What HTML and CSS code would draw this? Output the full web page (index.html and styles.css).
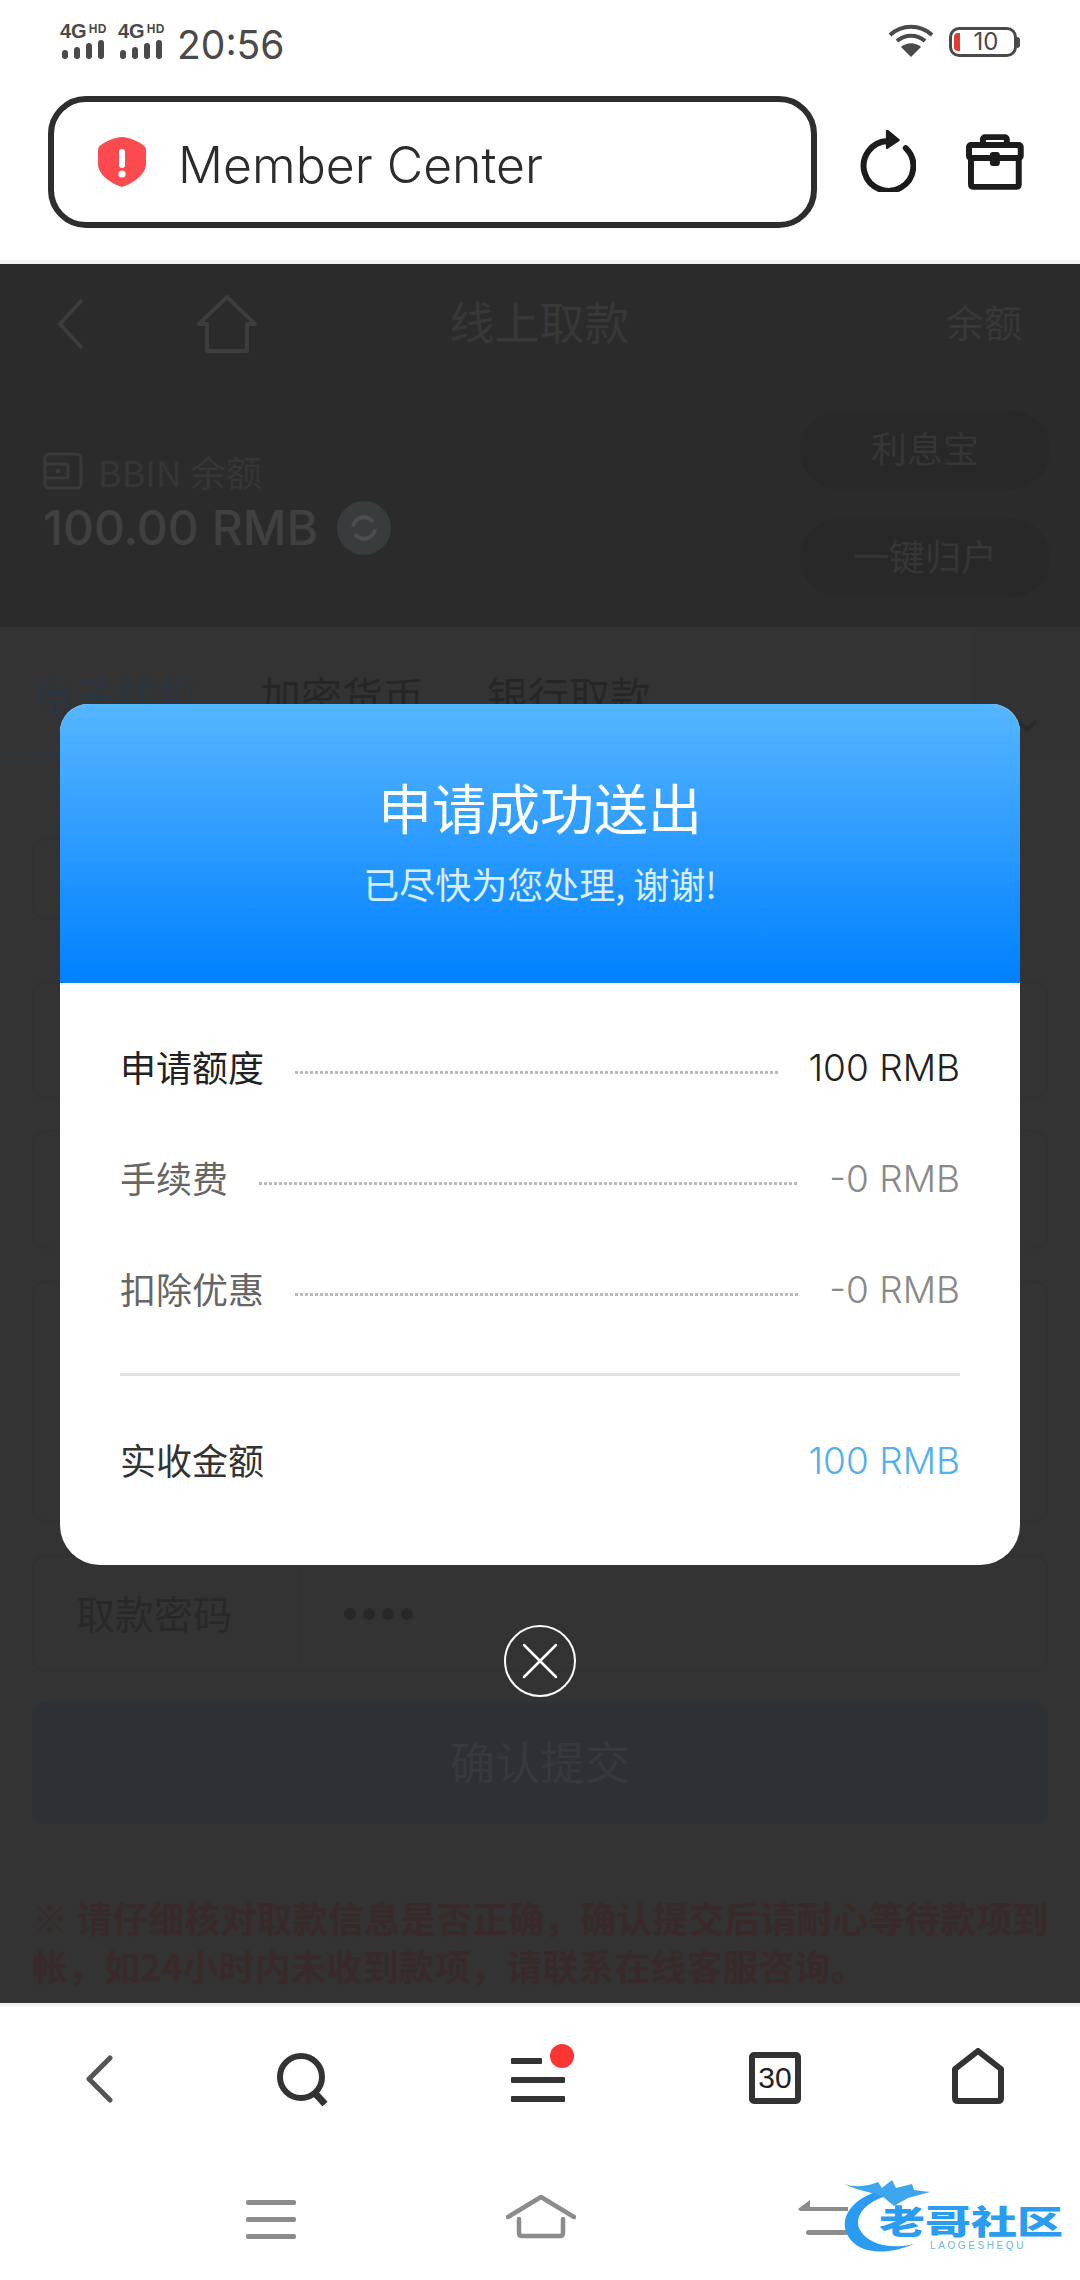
FILE: index.html
```html
<!DOCTYPE html>
<html>
<head>
  <title>Member Center</title>
  <link rel="stylesheet" href="styles.css">
</head>
<body>
  <div class="status-bar">
    <div class="net"><span class="net-top">4G<small>HD</small></span>
      <svg width="44" height="20" viewBox="0 0 44 20"><g fill="#4a4a4a"><rect x="2" y="10" width="6" height="9" rx="3"/><rect x="14" y="7" width="6" height="12" rx="3"/><rect x="26" y="3" width="6" height="16" rx="3"/><rect x="38" y="0" width="6" height="19" rx="3"/></g></svg>
    </div>
    <div class="net"><span class="net-top">4G<small>HD</small></span>
      <svg width="44" height="20" viewBox="0 0 44 20"><g fill="#4a4a4a"><rect x="2" y="10" width="6" height="9" rx="3"/><rect x="14" y="7" width="6" height="12" rx="3"/><rect x="26" y="3" width="6" height="16" rx="3"/><rect x="38" y="0" width="6" height="19" rx="3"/></g></svg>
    </div>
    <span class="time">20:56</span>
    <svg class="wifi" width="46" height="33" viewBox="0 0 46 33"><g fill="none" stroke="#4a4a4a" stroke-width="4"><path d="M2 11 C14 0 32 0 44 11"/><path d="M9 17 C17 10 29 10 37 17"/></g><path d="M13 23 C19 18 27 18 33 23 L23 33 Z" fill="#4a4a4a"/></svg>
    <div class="battery"><i class="battery-level"></i>10</div>
    <i class="battery-cap"></i>
  </div>

  <div class="address-row">
    <div class="address">
      <svg width="48" height="50" viewBox="0 0 48 50"><path d="M24 0 C30 0 40 4 45 8 C47 9 48 11 48 13 V27 C48 38 34 47 24 50 C14 47 0 38 0 27 V13 C0 11 1 9 3 8 C8 4 18 0 24 0 Z" fill="#fb4b4e"/><rect x="21" y="12" width="6" height="19" rx="3" fill="#fff"/><circle cx="24" cy="37" r="3.6" fill="#fff"/></svg>
      <span class="address-text">Member Center</span>
    </div>
    <svg class="reload" width="58" height="62" viewBox="0 0 58 62"><path d="M47 18 A25 25 0 1 1 29 11" fill="none" stroke="#1c1c1c" stroke-width="6" stroke-linecap="round"/><path d="M28 0 L40 10 L28 18 Z" fill="#1c1c1c" stroke="#1c1c1c" stroke-width="2" stroke-linejoin="round"/></svg>
    <svg class="toolbox" width="58" height="56" viewBox="0 0 58 56"><g fill="none" stroke="#1c1c1c" stroke-width="6" stroke-linejoin="round"><path d="M17 11 V5 C17 4 18 3 19 3 H39 C40 3 41 4 41 5 V11"/><rect x="3" y="11" width="52" height="13" rx="2"/><path d="M5 24 V50 C5 52 6 53 8 53 H50 C52 53 53 52 53 50 V24"/></g><rect x="24" y="18" width="10" height="14" rx="3" fill="#1c1c1c"/></svg>
  </div>
  <div class="separator"></div>

  <div class="page">
    <div class="dark-top">
      <div class="nav-head">
        <div class="nav-left">
          <svg width="28" height="52" viewBox="0 0 28 52"><path d="M25 2 L3 26 L25 50" fill="none" stroke="#3d3d3d" stroke-width="4"/></svg>
          <svg width="60" height="60" viewBox="0 0 60 60"><path d="M30 3 L2 30 H10 V57 H50 V30 H58 Z" fill="none" stroke="#3d3d3d" stroke-width="4" stroke-linejoin="round"/></svg>
        </div>
        <div class="nav-title">线上取款</div>
        <div class="nav-right">余额</div>
      </div>
      <div class="balance">
        <div class="balance-left">
          <div class="balance-label">
            <svg width="40" height="38" viewBox="0 0 40 38"><g fill="none" stroke="#3a3a3a" stroke-width="3"><rect x="2" y="2" width="36" height="34" rx="4"/><path d="M2 12 H22 C24 12 25 13 25 15 V23 C25 25 24 26 22 26 H2"/></g><circle cx="15" cy="19" r="2.5" fill="#3a3a3a"/></svg>
            <span>BBIN 余额</span>
          </div>
          <div class="balance-amount">100.00 RMB
            <span class="coin"><svg width="30" height="30" viewBox="0 0 30 30"><g fill="none" stroke="#4a4e4e" stroke-width="4"><path d="M4 14 A11 11 0 0 1 24 9"/><path d="M26 16 A11 11 0 0 1 6 21"/></g></svg></span>
          </div>
        </div>
        <div class="balance-right">
          <div class="pill">利息宝</div>
          <div class="pill">一键归户</div>
        </div>
      </div>
    </div>

    <div class="tabs">
      <span class="tab tab-active">电子钱包</span>
      <span class="tab">加密货币</span>
      <span class="tab">银行取款</span>
      <span class="tab-more"><svg width="22" height="14" viewBox="0 0 22 14"><path d="M2 2 L11 11 L20 2" fill="none" stroke="#2a2a2a" stroke-width="4"/></svg></span>
    </div>

    <div class="form">
      <div class="box box-a"></div>
      <div class="box box-b"></div>
      <div class="box box-c"></div>
      <div class="box box-d"></div>
      <div class="box box-e">
        <span class="pwd-label">取款密码</span>
        <span class="pwd-dots"><i></i><i></i><i></i><i></i></span>
      </div>
      <div class="submit">确认提交</div>
      <p class="warning">※ 请仔细核对取款信息是否正确，确认提交后请耐心等待款项到帐，如24小时内未收到款项，请联系在线客服咨询。</p>
    </div>

    <div class="dialog">
      <div class="card">
        <div class="card-head">
          <div class="card-title">申请成功送出</div>
          <div class="card-sub">已尽快为您处理, 谢谢!</div>
        </div>
        <div class="card-body">
          <div class="line"><span class="label">申请额度</span><i class="dots"></i><span class="value">100 RMB</span></div>
          <div class="line line-muted"><span class="label">手续费</span><i class="dots"></i><span class="value value-muted">-0 RMB</span></div>
          <div class="line line-muted"><span class="label">扣除优惠</span><i class="dots"></i><span class="value value-muted">-0 RMB</span></div>
          <div class="rule"></div>
          <div class="line line-total"><span class="label">实收金额</span><span class="value value-blue">100 RMB</span></div>
        </div>
      </div>
      <div class="close">
        <svg width="36" height="36" viewBox="0 0 36 36"><path d="M2 2 L34 34 M34 2 L2 34" stroke="#fff" stroke-width="2.5" stroke-linecap="round"/></svg>
      </div>
    </div>
  </div>

  <div class="toolbar">
    <svg class="t-back" width="30" height="48" viewBox="0 0 30 48"><path d="M26 3 L5 24 L26 45" fill="none" stroke="#555" stroke-width="5" stroke-linecap="round" stroke-linejoin="round"/></svg>
    <svg class="t-search" width="52" height="54" viewBox="0 0 52 54"><circle cx="24" cy="25" r="21" fill="none" stroke="#333" stroke-width="6"/><path d="M36 39 L48 52" stroke="#333" stroke-width="7"/></svg>
    <div class="t-menu">
      <i class="t-bar t-bar-short"></i><i class="t-bar"></i><i class="t-bar"></i>
      <i class="t-dot"></i>
    </div>
    <div class="t-tabs">30</div>
    <svg class="t-home" width="52" height="56" viewBox="0 0 52 56"><path d="M26 3 L49 21 V50 C49 52 48 53 46 53 H6 C4 53 3 52 3 50 V21 Z" fill="none" stroke="#333" stroke-width="6" stroke-linejoin="round"/></svg>
  </div>

  <div class="sysbar">
    <div class="s-menu"><i></i><i></i><i></i></div>
    <svg class="s-home" width="70" height="44" viewBox="0 0 70 44"><g fill="none" stroke="#8c8c8c" stroke-width="4.5" stroke-linecap="round" stroke-linejoin="round"><path d="M2 22 L35 2 L68 22"/><path d="M13 24 V38 C13 40 14 41 16 41 H54 C56 41 57 40 57 38 V24"/></g></svg>
    <svg class="s-back" width="50" height="36" viewBox="0 0 50 36"><path d="M0 9 L12 0 V7 H50 V11 H2 Z" fill="#8c8c8c"/><rect x="8" y="30" width="42" height="5" rx="2.5" fill="#8c8c8c"/></svg>
  </div>

  <div class="logo">
    <svg width="110" height="76" viewBox="0 0 110 76"><path d="M44 10 C14 18 0 38 10 56 C20 74 48 76 76 64 C52 70 30 64 22 50 C16 38 24 24 48 16 Z" fill="#2a9bf0"/><path d="M6 4 C20 8 30 6 40 2 L44 8 L54 0 L58 8 L74 4 L76 10 L92 12 L70 18 L56 26 L44 16 C32 12 18 10 6 4 Z" fill="#3ea6ef"/></svg>
    <span class="logo-cn">老哥社区</span>
    <span class="logo-en">LAOGESHEQU</span>
  </div>
</body>
</html>
```

FILE: styles.css
```css
* {
  box-sizing: border-box;
}

body {
  margin: 0;
  width: 1080px;
  height: 2280px;
  overflow: hidden;
  position: relative;
  background-color: #fff;
  font-family: "Noto Sans CJK SC", "Noto Sans", sans-serif;
  display: flex;
  flex-direction: column;
}

i {
  display: block;
}

/* status bar */
.status-bar {
  height: 96px;
  padding: 20px 0 0 60px;
  display: flex;
  align-items: flex-start;
  color: #4a4a4a;
}

.net {
  width: 46px;
  margin-right: 12px;
  display: flex;
  flex-direction: column;
}

.net-top {
  font: 700 20px/18px "Liberation Sans", sans-serif;
  white-space: nowrap;
}

.net-top small {
  margin-left: 2px;
  font-size: 12px;
  letter-spacing: 0.5px;
  vertical-align: 5px;
}

.time {
  font: 400 39px/48px Inter, sans-serif;
  margin: 1px 0 0 1px;
  color: #4a4a4a;
}

.wifi {
  margin: 4px 0 0 auto;
}

.battery {
  width: 68px;
  height: 30px;
  margin: 7px 0 0 15px;
  border: 3px solid #4a4a4a;
  border-radius: 10px;
  font: 400 24px/24px Inter, sans-serif;
  text-align: center;
  padding-left: 6px;
  position: relative;
}

.battery-level {
  position: absolute;
  left: 2px;
  top: 3px;
  width: 6px;
  height: 18px;
  background-color: #e8392f;
  border-radius: 4px 0 0 4px;
}

.battery-cap {
  width: 3px;
  height: 11px;
  margin: 17px 60px 0 0;
  background-color: #4a4a4a;
  border-radius: 0 3px 3px 0;
}

/* browser address row */
.address-row {
  height: 164px;
  padding: 0 56px 32px 48px;
  display: flex;
  align-items: center;
}

.address {
  width: 772px;
  height: 132px;
  border: 6px solid #2e2e2e;
  border-radius: 38px;
  padding-left: 44px;
  display: flex;
  align-items: center;
}

.address-text {
  margin: 5px 0 0 32px;
  font: 300 50px/60px Inter, sans-serif;
  color: #2c2c2c;
}

.reload {
  margin: -2px 0 0 42px;
}

.toolbox {
  margin-left: 50px;
}

.separator {
  height: 4px;
  background-color: #f1f1f1;
}

/* page behind the dialog */
.page {
  height: 1739px;
  background-color: #333;
  position: relative;
  overflow: hidden;
}

.dark-top {
  height: 363px;
  background-color: #2b2b2b;
}

.nav-head {
  height: 124px;
  padding: 0 58px 0 57px;
  display: grid;
  grid-template-columns: 1fr auto 1fr;
  align-items: center;
  color: #383838;
}

.nav-left {
  display: flex;
  align-items: center;
  gap: 112px;
  margin-top: -4px;
}

.nav-title {
  font-size: 45px;
  line-height: 60px;
  margin-top: -10px;
}

.nav-right {
  font-size: 38px;
  text-align: right;
  margin-top: -12px;
}

.balance {
  padding: 23px 30px 0 43px;
  display: flex;
  justify-content: space-between;
}

.balance-left {
  padding-top: 41px;
}

.balance-label {
  display: flex;
  align-items: center;
  gap: 15px;
  font-size: 36px;
  line-height: 38px;
  color: #363636;
}

.balance-amount {
  margin-top: 8px;
  display: flex;
  align-items: center;
  gap: 19px;
  font: 500 48px/60px Inter, sans-serif;
  color: #404040;
}

.coin {
  width: 54px;
  height: 54px;
  border-radius: 50%;
  background-color: #383c3c;
  display: flex;
  align-items: center;
  justify-content: center;
}

.balance-right {
  width: 250px;
  display: flex;
  flex-direction: column;
  gap: 30px;
}

.pill {
  height: 78px;
  border-radius: 39px;
  background-color: #282828;
  color: #363636;
  font-size: 36px;
  line-height: 72px;
  text-align: center;
}

.tabs {
  height: 131px;
  padding: 6px 0 0 33px;
  display: flex;
  align-items: center;
  gap: 63px;
  font-size: 41px;
  color: #262626;
  position: relative;
  border-bottom: 4px solid #333;
}

.tab-active {
  color: #2a353f;
}

.tab-active::after {
  content: "";
  position: absolute;
  left: 0;
  bottom: -4px;
  width: 228px;
  height: 4px;
  background-color: #2c3440;
}

.tab-more {
  position: absolute;
  right: 0;
  top: 0;
  width: 107px;
  height: 127px;
  padding: 58px 0 0 43px;
  background-color: #323232;
}

.form {
  padding: 80px 32px 0;
  display: flex;
  flex-direction: column;
}

.box {
  border: 2px solid #313131;
  border-radius: 14px;
}

.box-a {
  width: 250px;
  height: 82px;
}

.box-b {
  height: 118px;
  margin-top: 61px;
}

.box-c {
  height: 119px;
  margin-top: 31px;
}

.box-d {
  height: 241px;
  margin-top: 32px;
}

.box-e {
  height: 117px;
  margin-top: 33px;
  padding-left: 42px;
  display: flex;
}

.pwd-label {
  width: 224px;
  border-right: 2px solid #313131;
  font-size: 39px;
  line-height: 110px;
  color: #282828;
}

.pwd-dots {
  margin-left: 44px;
  display: flex;
  align-items: center;
  gap: 7px;
}

.pwd-dots i {
  width: 12px;
  height: 12px;
  border-radius: 50%;
  background-color: #282828;
}

.submit {
  height: 121px;
  margin-top: 31px;
  border-radius: 12px;
  background-color: #2c3135;
  color: #363a3c;
  font-size: 45px;
  line-height: 116px;
  text-align: center;
}

.warning {
  margin: 69px -4px 0 0;
  font-size: 36px;
  line-height: 48px;
  font-weight: 700;
  color: #382a29;
}

/* success dialog */
.dialog {
  position: absolute;
  left: 60px;
  top: 440px;
  width: 960px;
  display: flex;
  flex-direction: column;
  align-items: center;
}

.card {
  width: 100%;
  height: 861px;
  background-color: #fff;
  border-radius: 28px 28px 40px 40px;
  overflow: hidden;
}

.card-head {
  height: 279px;
  padding-top: 67px;
  background: linear-gradient(#56b6ff, #0080ff);
  text-align: center;
}

.card-title {
  font-size: 54px;
  line-height: 72px;
  color: #fff;
}

.card-sub {
  margin-top: 15px;
  font-size: 36px;
  line-height: 50px;
  color: #d9efff;
}

.card-body {
  padding: 57px 60px 0;
}

.line {
  height: 56px;
  margin-bottom: 55px;
  display: flex;
  align-items: center;
  font-size: 36px;
  color: #222;
}

.label {
  margin-top: -5px;
}

.value {
  font: 300 37px/56px Inter, sans-serif;
}

.dots {
  flex: 1;
  height: 3px;
  margin: 8px 31px 0;
  background: repeating-linear-gradient(90deg, #bbb 0, #bbb 3px, transparent 3px, transparent 5px);
}

.line-muted {
  color: #666;
}

.value-muted {
  color: #8a8a8a;
}

.rule {
  height: 3px;
  margin-top: 9px;
  background-color: #e2e2e2;
}

.line-total {
  margin: 57px 0 0;
  justify-content: space-between;
  color: #333;
}

.value-blue {
  color: #54b0ee;
}

.close {
  width: 72px;
  height: 72px;
  margin-top: 60px;
  border: 2px solid #fff;
  border-radius: 50%;
  display: flex;
  align-items: center;
  justify-content: center;
}

/* browser toolbar */
.toolbar {
  height: 156px;
  border-top: 3px solid #eee;
  position: relative;
  display: flex;
  align-items: flex-start;
  padding-top: 43px;
}

.t-back {
  margin: 6px 0 0 84px;
}

.t-search {
  margin: 3px 0 0 163px;
}

.t-menu {
  width: 54px;
  margin: 9px 0 0 182px;
  display: flex;
  flex-direction: column;
  gap: 13px;
  position: relative;
}

.t-bar {
  height: 6px;
  border-radius: 1px;
  background-color: #333;
}

.t-bar-short {
  width: 31px;
}

.t-dot {
  position: absolute;
  left: 39px;
  top: -14px;
  width: 24px;
  height: 24px;
  border-radius: 50%;
  background-color: #fb3434;
  box-shadow: 0 0 0 2px #fff;
}

.t-tabs {
  width: 52px;
  height: 52px;
  margin: 3px 0 0 184px;
  border: 6px solid #333;
  border-radius: 5px;
  font: 400 30px/40px "Liberation Sans", sans-serif;
  text-align: center;
  color: #222;
}

.t-home {
  margin: -1px 0 0 151px;
}

/* system navigation */
.sysbar {
  flex: 1;
  display: flex;
  align-items: flex-start;
  padding-top: 36px;
  position: relative;
}

.s-menu {
  width: 50px;
  margin: 5px 0 0 246px;
  display: flex;
  flex-direction: column;
  gap: 12px;
}

.s-menu i {
  height: 5px;
  border-radius: 2px;
  background-color: #8c8c8c;
}

.s-home {
  margin-left: 210px;
}

.s-back {
  margin: 5px 0 0 222px;
}

/* watermark */
.logo {
  position: absolute;
  left: 838px;
  top: 2180px;
  width: 230px;
  height: 80px;
}

.logo-cn {
  position: absolute;
  left: 41px;
  top: 21px;
  font-size: 46px;
  line-height: 38px;
  font-weight: 900;
  white-space: nowrap;
  color: #2a9df2;
  transform: scaleY(0.72);
}

.logo-en {
  position: absolute;
  left: 92px;
  top: 60px;
  font: 400 10px/12px "Liberation Sans", sans-serif;
  letter-spacing: 2.6px;
  color: #6cb6ea;
}
```
